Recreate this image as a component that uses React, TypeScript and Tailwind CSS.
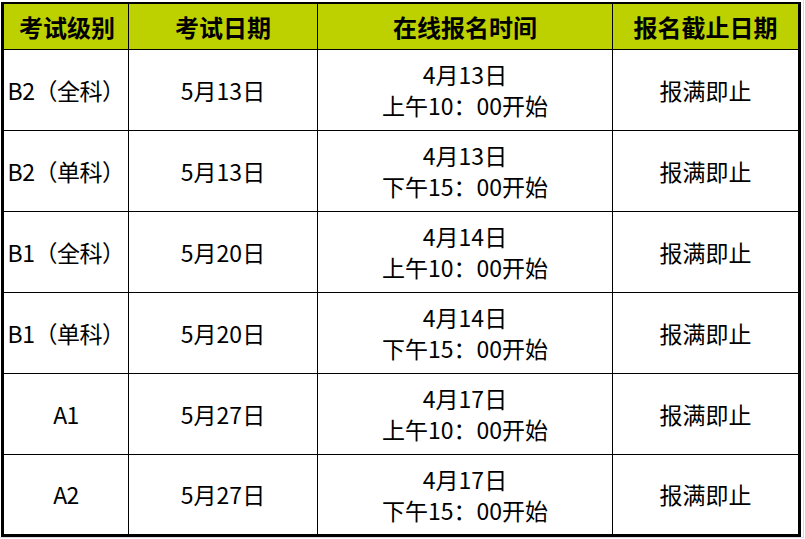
import React from 'react';

type Row = {
  level: string;
  date: string;
  openDay: string;
  openTime: string;
};

const rows: Row[] = [
  { level: 'B2（全科）', date: '5月13日', openDay: '4月13日', openTime: '上午10：00开始' },
  { level: 'B2（单科）', date: '5月13日', openDay: '4月13日', openTime: '下午15：00开始' },
  { level: 'B1（全科）', date: '5月20日', openDay: '4月14日', openTime: '上午10：00开始' },
  { level: 'B1（单科）', date: '5月20日', openDay: '4月14日', openTime: '下午15：00开始' },
  { level: 'A1', date: '5月27日', openDay: '4月17日', openTime: '上午10：00开始' },
  { level: 'A2', date: '5月27日', openDay: '4月17日', openTime: '下午15：00开始' },
];

const headers = ['考试级别', '考试日期', '在线报名时间', '报名截止日期'];

const App: React.FC = () => {
  return (
    <div
      className="w-[805px] h-[539px] bg-white overflow-hidden"
      style={{ fontFamily: '"Noto Sans CJK SC", "Noto Sans", sans-serif' }}
    >
      {/* spreadsheet gridline frame */}
      <div className="w-[804px] h-[538px] border-r border-b border-[#d9d9e6] pt-[2px] pl-[1px]">
        <div className="w-[800px] border-x-[3px] border-t-2 border-b-[3px] border-black grid grid-cols-[125px_189px_295px_1fr] text-black text-[23px]">
          {/* Header */}
          {headers.map((h, i) => (
            <div
              key={h}
              className={`h-[46px] bg-[#bdd100] border-b border-black flex items-center justify-center font-bold text-[24px] ${
                i < 3 ? 'border-r' : ''
              } ${i === 0 ? 'pl-[2px]' : ''}`}
            >
              {h}
            </div>
          ))}

          {/* Body */}
          {rows.map((r, ri) => {
            const last = ri === rows.length - 1;
            const rowCls = `${last ? 'h-[79px]' : 'h-[81px] border-b'} border-black flex flex-col items-center justify-center leading-[31px]`;
            return (
              <React.Fragment key={ri}>
                <div className={`${rowCls} border-r tracking-[-0.5px]`}>{r.level}</div>
                <div className={`${rowCls} border-r`}>{r.date}</div>
                <div className={`${rowCls} border-r`}>
                  <span>{r.openDay}</span>
                  <span>{r.openTime}</span>
                </div>
                <div className={rowCls}>报满即止</div>
              </React.Fragment>
            );
          })}
        </div>
      </div>
    </div>
  );
};

export default App;
